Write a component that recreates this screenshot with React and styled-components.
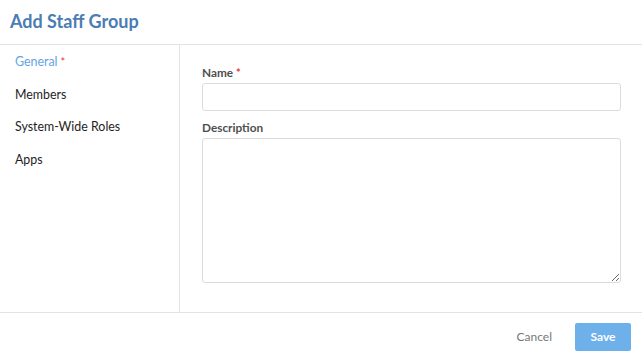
import React from 'react';
import styled, { createGlobalStyle } from 'styled-components';

const Global = createGlobalStyle`
  html, body {
    margin: 0;
    padding: 0;
    background: #fff;
    font-family: Lato, "Open Sans", sans-serif;
  }
  * { box-sizing: border-box; }
`;

const Dialog = styled.div`
  width: 642px;
  height: 360px;
  display: flex;
  flex-direction: column;
  background: #fff;
`;

const Header = styled.div`
  height: 45px;
  border-bottom: 1px solid #e3e3e3;
  padding: 9px 10px 0;
  h1 {
    margin: 0;
    font-size: 18px;
    font-weight: 700;
    color: #4a7db3;
    line-height: 24px;
  }
`;

const Body = styled.div`
  display: flex;
  height: 268px;
  border-bottom: 1px solid #e3e3e3;
`;

const Sidebar = styled.nav`
  width: 180px;
  border-right: 1px solid #e3e3e3;
  padding-top: 9px;
  display: flex;
  flex-direction: column;
`;

const NavItem = styled.div`
  padding: 0 15px;
  height: 32.5px;
  line-height: 16px;
  font-size: 12.4px;
  color: ${(p) => (p.$active ? '#64a3e3' : '#1e1e1e')};
`;

const Star = styled.span`
  color: #e8323c;
  margin-left: 3px;
  font-size: 11px;
  vertical-align: top;
`;

const Main = styled.div`
  flex: 1;
  padding: 20px 21px 0 22px;
`;

const Label = styled.div`
  font-size: 11.8px;
  font-weight: 700;
  color: #4f4f4f;
  line-height: 15px;
  margin-bottom: 3px;
`;

const Input = styled.input`
  display: block;
  width: 419px;
  height: 28px;
  border: 1px solid #dcdcdc;
  border-radius: 3px;
  margin-bottom: 9px;
  outline: none;
`;

const TextArea = styled.textarea`
  display: block;
  width: 419px;
  height: 145px;
  border: 1px solid #dcdcdc;
  border-radius: 3px;
  outline: none;
`;

const Footer = styled.div`
  flex: 1;
  display: flex;
  align-items: center;
  justify-content: flex-end;
  padding: 0 11px 0 0;
  gap: 23px;
`;

const CancelButton = styled.button`
  border: none;
  background: none;
  font-family: inherit;
  font-size: 12px;
  color: #777;
  padding: 0;
`;

const SaveButton = styled.button`
  width: 56px;
  height: 28px;
  border: none;
  border-radius: 2px;
  background: #6db0ea;
  color: #fff;
  font-family: inherit;
  font-size: 12px;
  font-weight: 700;
`;

export default function App() {
  return (
    <>
      <Global />
      <Dialog>
        <Header>
          <h1>Add Staff Group</h1>
        </Header>
        <Body>
          <Sidebar>
            <NavItem $active>
              General<Star>*</Star>
            </NavItem>
            <NavItem>Members</NavItem>
            <NavItem>System-Wide Roles</NavItem>
            <NavItem>Apps</NavItem>
          </Sidebar>
          <Main>
            <Label>
              Name<Star>*</Star>
            </Label>
            <Input type="text" />
            <Label>Description</Label>
            <TextArea />
          </Main>
        </Body>
        <Footer>
          <CancelButton>Cancel</CancelButton>
          <SaveButton>Save</SaveButton>
        </Footer>
      </Dialog>
    </>
  );
}
